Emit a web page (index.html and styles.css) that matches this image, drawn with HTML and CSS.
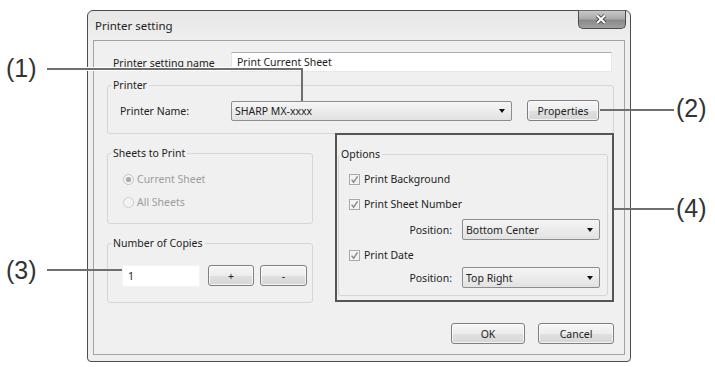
FILE: index.html
```html
<!DOCTYPE html>
<html lang="en">

<head>
  <meta charset="UTF-8">
  <title>Printer setting</title>
  <link rel="stylesheet" href="styles.css">
</head>

<body>
  <div class="canvas">
    <div class="dialog">
      <div class="titlebar">
        <span class="title">Printer setting</span>
        <button class="close-btn" type="button">
          <svg width="48" height="19" viewBox="0 0 48 19">
            <path d="M19.5 5.5 L27.5 13 M27.5 5.5 L19.5 13" stroke="#3c3c3c" stroke-width="3.8" fill="none" />
            <path d="M19.5 5.5 L27.5 13 M27.5 5.5 L19.5 13" stroke="#ffffff" stroke-width="2.2" fill="none" />
          </svg>
        </button>
      </div>

      <div class="client">
        <div class="name-row">
          <label>Printer setting name</label>
          <div class="textbox name-box">Print Current Sheet</div>
        </div>

        <fieldset class="group printer-group">
          <legend>Printer</legend>
          <div class="printer-row">
            <span class="field-label">Printer Name:</span>
            <div class="combo printer-combo"><span>SHARP MX-xxxx</span><i class="arrow"></i></div>
            <button class="btn props-btn" type="button">Properties</button>
          </div>
        </fieldset>

        <div class="columns">
          <div class="left-col">
            <fieldset class="group sheets-group">
              <legend>Sheets to Print</legend>
              <div class="radio-list">
                <div class="radio-row">
                  <svg class="radio" width="11" height="11" viewBox="0 0 11 11">
                    <circle cx="5.5" cy="5.5" r="5" fill="#f3f3f3" stroke="#c2c2c2" />
                    <circle cx="5.5" cy="5.5" r="2.6" fill="#a9a9a9" />
                  </svg>
                  <span>Current Sheet</span>
                </div>
                <div class="radio-row">
                  <svg class="radio" width="11" height="11" viewBox="0 0 11 11">
                    <circle cx="5.5" cy="5.5" r="5" fill="#f3f3f3" stroke="#cccccc" />
                  </svg>
                  <span>All Sheets</span>
                </div>
              </div>
            </fieldset>

            <fieldset class="group copies-group">
              <legend>Number of Copies</legend>
              <div class="copies-row">
                <div class="textbox copies-box">1</div>
                <button class="btn step-btn" type="button">+</button>
                <button class="btn step-btn minus" type="button">-</button>
              </div>
            </fieldset>
          </div>

          <div class="highlight">
            <fieldset class="group options-group">
              <legend>Options</legend>
              <div class="options-body">
                <div class="check-row">
                  <svg class="check" width="11" height="11" viewBox="0 0 11 11">
                    <rect x="0.5" y="0.5" width="10" height="10" fill="#f4f4f4" stroke="#a9a9a9" />
                    <path d="M2.6 5.6 L4.6 8.2 L8.6 2.4" fill="none" stroke="#8c8c8c" stroke-width="1.5" />
                  </svg>
                  <span>Print Background</span>
                </div>
                <div class="check-row row-2">
                  <svg class="check" width="11" height="11" viewBox="0 0 11 11">
                    <rect x="0.5" y="0.5" width="10" height="10" fill="#f4f4f4" stroke="#a9a9a9" />
                    <path d="M2.6 5.6 L4.6 8.2 L8.6 2.4" fill="none" stroke="#8c8c8c" stroke-width="1.5" />
                  </svg>
                  <span>Print Sheet Number</span>
                </div>
                <div class="pos-row pos-1">
                  <span class="field-label">Position:</span>
                  <div class="combo pos-combo"><span>Bottom Center</span><i class="arrow"></i></div>
                </div>
                <div class="check-row row-3">
                  <svg class="check" width="11" height="11" viewBox="0 0 11 11">
                    <rect x="0.5" y="0.5" width="10" height="10" fill="#f4f4f4" stroke="#a9a9a9" />
                    <path d="M2.6 5.6 L4.6 8.2 L8.6 2.4" fill="none" stroke="#8c8c8c" stroke-width="1.5" />
                  </svg>
                  <span>Print Date</span>
                </div>
                <div class="pos-row pos-2">
                  <span class="field-label">Position:</span>
                  <div class="combo pos-combo"><span>Top Right</span><i class="arrow"></i></div>
                </div>
              </div>
            </fieldset>
          </div>
        </div>

        <div class="footer">
          <button class="btn ok-btn" type="button">OK</button>
          <button class="btn cancel-btn" type="button">Cancel</button>
        </div>
      </div>
    </div>

    <!-- callouts -->
    <div class="cl-line l1-h"></div>
    <div class="cl-line l1-v"></div>
    <div class="cl-line l2"></div>
    <div class="cl-line l3"></div>
    <div class="cl-line l4"></div>
    <span class="cl-num n1">(1)</span>
    <span class="cl-num n2">(2)</span>
    <span class="cl-num n3">(3)</span>
    <span class="cl-num n4">(4)</span>
  </div>
</body>

</html>
```

FILE: styles.css
```css
body {
  margin: 0;
  background-color: #ffffff;
  font-family: "Noto Sans", "Open Sans", sans-serif;
  font-size: 10.5px;
  color: #222222;
}

.canvas {
  position: relative;
  width: 715px;
  height: 367px;
  padding: 10px 0 0 87px;
  box-sizing: border-box;
  overflow: hidden;
}

.dialog {
  width: 544px;
  height: 352px;
  box-sizing: border-box;
  border: 1px solid #4d4d4d;
  border-radius: 6px 6px 4px 4px;
  background: linear-gradient(#e6e6e6, #efefef 30px, #eeeeee);
  padding: 0 5px 6px;
  display: flex;
  flex-direction: column;
}

.titlebar {
  height: 29px;
  flex-shrink: 0;
  display: flex;
  justify-content: space-between;
  align-items: flex-start;
}

.title {
  padding: 7px 0 0 2px;
  line-height: 16px;
  font-size: 11.5px;
}

.close-btn {
  width: 48px;
  height: 19px;
  margin: -1px -1px 0 0;
  padding: 0;
  border: 1px solid #4a4a4a;
  border-top-color: #6a6a6a;
  border-radius: 0 0 5px 5px;
  background: linear-gradient(#c8c8c8, #ababab 45%, #8a8a8a 55%, #a0a0a0);
  display: flex;
}

.close-btn svg {
  margin: -1px 0 0 -1px;
}

.client {
  flex: 1;
  border: 1px solid #a3a3a3;
  background-color: #f0f0f0;
  padding: 11px 10px 0 13px;
}

/* text fields */
.textbox {
  box-sizing: border-box;
  background-color: #ffffff;
  border: 1px solid;
  border-color: #abadb3 #e3e9ef #e3e9ef #e2e3ea;
}

.name-row {
  display: flex;
  align-items: center;
  height: 20px;
  margin: 0 2px 0 6px;
}

.name-row label {
  width: 118px;
  line-height: 16px;
  padding-top: 2px;
}

.name-box {
  flex: 1;
  height: 20px;
  line-height: 18px;
  padding-left: 5px;
}

/* group boxes */
fieldset.group {
  margin: 0;
  padding: 0;
  min-width: 0;
  border: 1px solid #d6d6d6;
  border-radius: 3px;
}

fieldset.group legend {
  padding: 0 2px;
  margin-left: 3px;
  line-height: 14px;
}

.printer-group {
  margin-top: 6px !important;
}

.printer-row {
  display: flex;
  align-items: center;
  height: 21px;
  padding: 8px 0 12px 12px;
}

.printer-row .field-label {
  width: 111px;
}

.combo {
  box-sizing: border-box;
  height: 20px;
  border: 1px solid #8d8d8d;
  border-radius: 2px;
  background: linear-gradient(#f5f5f5, #ececec 50%, #e2e2e2);
  display: flex;
  align-items: center;
  justify-content: space-between;
  padding-left: 3px;
}

.arrow {
  width: 0;
  height: 0;
  border-top: 4px solid #111111;
  border-left: 3.5px solid transparent;
  border-right: 3.5px solid transparent;
  margin-right: 6px;
}

.printer-combo {
  width: 281px;
  margin-right: 15px;
}

.btn {
  box-sizing: border-box;
  height: 21px;
  padding: 0;
  border: 1px solid #7f7f7f;
  border-radius: 3px;
  background: linear-gradient(#f6f6f6, #ededed 50%, #e0e0e0 52%, #d6d6d6);
  box-shadow: inset 0 0 0 1px rgba(255, 255, 255, 0.7);
  font: inherit;
  color: inherit;
}

.props-btn {
  width: 72px;
}

/* lower columns */
.columns {
  display: grid;
  grid-template-columns: 206px 279px;
  column-gap: 22px;
  margin-top: -1px;
}

.sheets-group {
  margin-top: 13px !important;
}

.radio-list {
  padding: 11px 0 13px 15px;
}

.radio-row {
  display: flex;
  align-items: center;
  height: 16px;
  color: #9c9c9c;
}

.radio-row + .radio-row {
  margin-top: 7px;
}

.radio {
  margin-right: 3px;
}

.copies-group {
  margin-top: 12px !important;
}

.copies-row {
  display: flex;
  align-items: flex-start;
  padding: 15px 0 15px 14px;
}

.copies-box {
  width: 78px;
  height: 22px;
  line-height: 20px;
  padding-left: 5px;
  border-color: #f4f4f4;
}

.step-btn {
  width: 46px;
  margin-left: 8px;
}

.step-btn.minus {
  width: 47px;
  margin-left: 6px;
}

/* annotated options frame */
.highlight {
  box-sizing: border-box;
  height: 169px;
  border: 2px solid #555555;
}

.options-group {
  margin: 12px 4px 0 1px !important;
}

.options-group legend {
  margin-left: 0 !important;
}

.options-body {
  padding: 10px 7px 7px 10px;
}

.check-row {
  display: flex;
  align-items: center;
  height: 16px;
}

.check {
  margin-right: 4px;
}

.row-2 {
  margin-top: 9px;
}

.row-3 {
  margin-top: 7px;
}

.pos-row {
  display: flex;
  justify-content: flex-end;
  align-items: center;
  height: 21px;
}

.pos-1 {
  margin-top: 7px;
}

.pos-2 {
  margin-top: 4px;
}

.pos-row .field-label {
  margin-right: 10px;
}

.pos-combo {
  width: 138px;
  height: 21px;
}

.footer {
  display: flex;
  justify-content: flex-end;
  gap: 13px;
  margin-top: 20px;
}

.ok-btn {
  width: 74px;
}

.cancel-btn {
  width: 76px;
}

/* callout annotations */
.cl-line {
  position: absolute;
  background-color: #6f6f6f;
  box-shadow: 0 0 0 1px #ffffff;
}

.l1-h {
  left: 47px;
  top: 68px;
  width: 256px;
  height: 2px;
}

.l1-v {
  left: 301px;
  top: 68px;
  width: 2px;
  height: 33px;
  box-shadow: none;
}

.l2 {
  left: 600px;
  top: 109px;
  width: 74px;
  height: 2px;
  box-shadow: none;
}

.l3 {
  left: 47px;
  top: 269px;
  width: 75px;
  height: 2px;
  box-shadow: none;
}

.l4 {
  left: 614px;
  top: 208px;
  width: 60px;
  height: 2px;
  box-shadow: none;
}

.cl-num {
  position: absolute;
  font-family: "Liberation Sans", Arial, sans-serif;
  font-size: 25px;
  line-height: 24px;
  color: #333333;
}

.n1 {
  left: 6px;
  top: 56px;
}

.n2 {
  left: 676px;
  top: 96px;
}

.n3 {
  left: 6px;
  top: 258px;
}

.n4 {
  left: 676px;
  top: 196px;
}
```
